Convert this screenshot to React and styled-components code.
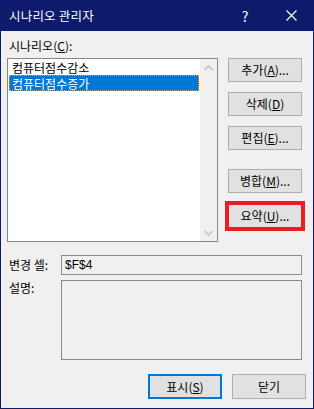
import React from 'react';
import styled, { createGlobalStyle } from 'styled-components';

const GlobalStyle = createGlobalStyle`
	html, body {
		margin: 0;
		padding: 0;
		background: #ffffff;
	}
	body {
		font-family: "Noto Sans CJK KR", "Noto Sans", "Liberation Sans", sans-serif;
		font-size: 12px;
		color: #000000;
	}
`;

const Dialog = styled.div`
	width: 314px;
	height: 409px;
	display: flex;
	flex-direction: column;
	background: #0c1b6c;
`;

const TitleBar = styled.div`
	height: 31px;
	flex: none;
	display: flex;
	align-items: center;
	color: #ffffff;
	padding-left: 9px;

	> .title {
		flex: 1;
		font-size: 12.5px;
		letter-spacing: 0.2px;
	}
	> .help {
		width: 46px;
		text-align: center;
		font-size: 14px;
		margin-right: 0;
	}
	> .close {
		width: 46px;
		display: flex;
		justify-content: center;
		align-items: center;
	}
`;

const Body = styled.div`
	flex: 1;
	background: #f0f0f0;
	margin: 0 1px 1px 1px;
	padding: 7px 11px 0 6px;
	display: flex;
	flex-direction: column;
`;

const Label = styled.div`
	line-height: 16px;
	padding-left: ${(p) => p.indent || 0}px;
	white-space: nowrap;
	width: ${(p) => (p.width ? p.width + 'px' : 'auto')};
	flex: none;
`;

const TopRow = styled.div`
	display: flex;
	margin-top: 4px;
`;

const ListBox = styled.div`
	width: 211px;
	height: 184px;
	box-sizing: border-box;
	border: 1px solid #828790;
	background: #ffffff;
	display: flex;
	padding: 0 0 0 1px;
`;

const Items = styled.div`
	flex: 1;
	padding-right: 1px;
`;

const Item = styled.div`
	height: 16px;
	line-height: 15px;
	padding-left: 2px;
	box-sizing: border-box;
	white-space: nowrap;
	background: ${(p) => (p.selected ? '#0078d7' : 'transparent')};
	color: ${(p) => (p.selected ? '#ffffff' : '#000000')};
	border: 1px ${(p) => (p.selected ? 'dotted #f59a3c' : 'solid transparent')};
`;

const ScrollBar = styled.div`
	width: 17px;
	background: #f0f0f0;
	display: flex;
	flex-direction: column;
	justify-content: space-between;

	> span {
		height: 17px;
		display: flex;
		align-items: center;
		justify-content: center;
	}
`;

const SideButtons = styled.div`
	display: flex;
	flex-direction: column;
	margin-left: 10px;
`;

const Button = styled.button`
	width: 74px;
	height: ${(p) => p.h || 24}px;
	margin-top: ${(p) => p.gap || 0}px;
	box-sizing: border-box;
	background: #e1e1e1;
	border: ${(p) => (p.primary ? '2px solid #0078d7' : '1px solid #adadad')};
	font-family: inherit;
	font-size: 12px;
	color: #000000;
	padding: 0;
	line-height: 16px;
	outline: ${(p) => (p.marked ? '4px solid #ed1c24' : 'none')};
	outline-offset: -1px;

	u {
		text-decoration: underline;
		text-underline-offset: 1px;
	}
`;

const FieldRow = styled.div`
	display: flex;
	align-items: ${(p) => (p.top ? 'flex-start' : 'center')};
	margin-top: ${(p) => p.gap}px;
`;

const Field = styled.div`
	width: 247px;
	height: ${(p) => p.h}px;
	box-sizing: border-box;
	border: 1px solid #8a8a8a;
	background: #f0f0f0;
	padding-left: 3px;
	line-height: 18px;
	font-family: "Liberation Sans", "Noto Sans CJK KR", sans-serif;
	font-size: 12px;
`;

const Footer = styled.div`
	display: flex;
	justify-content: flex-end;
	gap: 10px;
	margin-top: 14px;
	margin-right: -4px;
`;

const Chevron = ({ down }) => (
	<svg width="9" height="6" viewBox="0 0 9 6">
		<path
			d={down ? 'M0.5 1 L4.5 5 L8.5 1' : 'M0.5 5 L4.5 1 L8.5 5'}
			fill="none"
			stroke="#c3c3c3"
			strokeWidth="1.6"
		/>
	</svg>
);

export default function App() {
	return (
		<>
			<GlobalStyle />
			<Dialog>
				<TitleBar>
					<div className="title">시나리오 관리자</div>
					<div className="help">?</div>
					<div className="close">
						<svg width="11" height="11" viewBox="0 0 11 11">
							<path d="M0.5 0.5 L10.5 10.5 M10.5 0.5 L0.5 10.5" stroke="#ffffff" strokeWidth="1.2" />
						</svg>
					</div>
				</TitleBar>
				<Body>
					<Label indent={2}>시나리오(<u>C</u>):</Label>
					<TopRow>
						<ListBox>
							<Items>
								<Item>컴퓨터점수감소</Item>
								<Item selected>컴퓨터점수증가</Item>
							</Items>
							<ScrollBar>
								<span><Chevron /></span>
								<span><Chevron down /></span>
							</ScrollBar>
						</ListBox>
						<SideButtons>
							<Button>추가(<u>A</u>)...</Button>
							<Button gap={10}>삭제(<u>D</u>)</Button>
							<Button gap={10}>편집(<u>E</u>)...</Button>
							<Button gap={19}>병합(<u>M</u>)...</Button>
							<Button gap={11} marked>요약(<u>U</u>)...</Button>
						</SideButtons>
					</TopRow>
					<FieldRow gap={13}>
						<Label indent={2} width={52}>변경 셀:</Label>
						<Field h={20}>$F$4</Field>
					</FieldRow>
					<FieldRow gap={5} top>
						<Label indent={2} width={52}>설명:</Label>
						<Field h={80} />
					</FieldRow>
					<Footer>
						<Button h={25} primary>표시(<u>S</u>)</Button>
						<Button h={25}>닫기</Button>
					</Footer>
				</Body>
			</Dialog>
		</>
	);
}
